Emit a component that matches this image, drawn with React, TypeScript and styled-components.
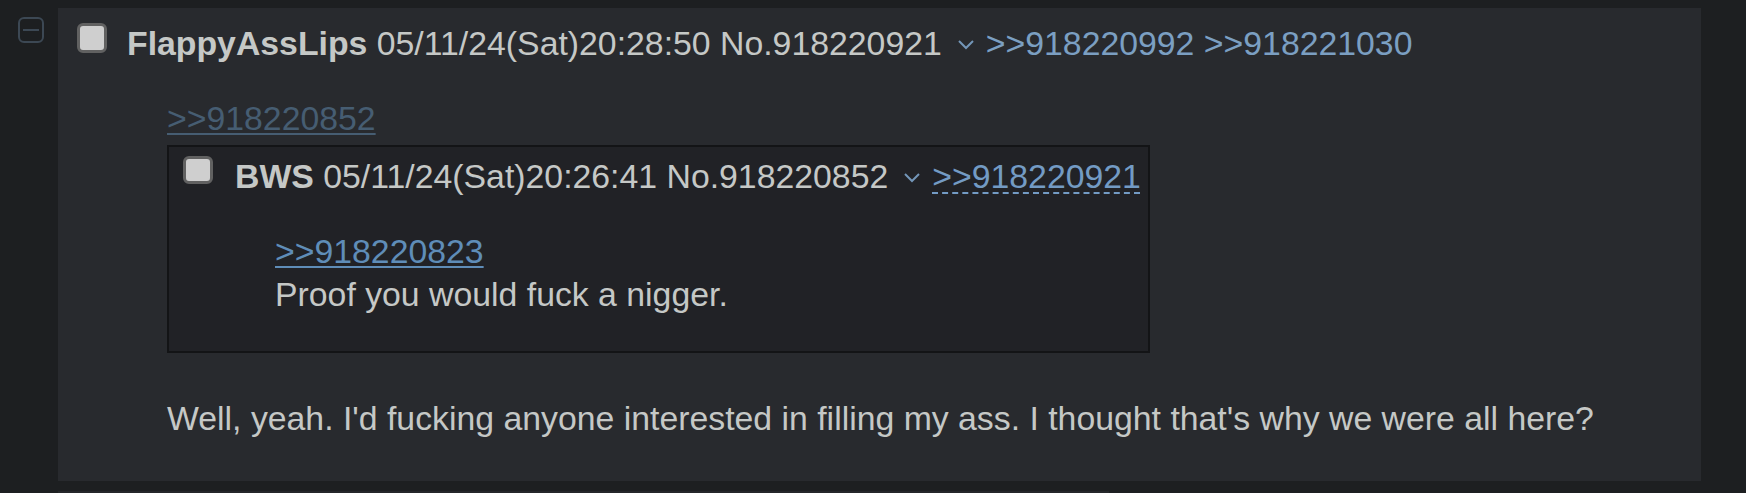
import React from 'react'
import styled, { createGlobalStyle } from 'styled-components'

const GlobalStyle = createGlobalStyle`
  body {
    margin: 0;
    background: #1d1f21;
    font-family: "Liberation Sans", Arial, sans-serif;
  }
`

const Chevron = (): JSX.Element => (
  <ChevronSvg viewBox="0 0 18 12">
    <polyline points="2,2 9,9 16,2" fill="none" stroke="#7396b8" strokeWidth="2" />
  </ChevronSvg>
)

const HideToggle = (): JSX.Element => (
  <svg width="26" height="26" viewBox="0 0 26 26">
    <rect x="1" y="1" width="24" height="24" rx="5" fill="none" stroke="#3c4854" strokeWidth="2" />
    <line x1="5" y1="13" x2="21" y2="13" stroke="#3c4854" strokeWidth="2" />
  </svg>
)

const App = (): JSX.Element => {
  return (
    <Page>
      <GlobalStyle />
      <Sidebar>
        <HideToggle />
      </Sidebar>
      <Thread>
        <Post>
          <PostInfo>
            <Checkbox $gap={20} />
            <InfoText>
              <Name>FlappyAssLips</Name> 05/11/24(Sat)20:28:50 No.918220921
              <Chevron />
              <Backlink>&gt;&gt;918220992</Backlink> <Backlink>&gt;&gt;918221030</Backlink>
            </InfoText>
          </PostInfo>
          <Message $left={90}>
            <QuoteLink $dim>&gt;&gt;918220852</QuoteLink>
            <InlinePost>
              <PostInfo>
                <Checkbox $gap={22} $small />
                <InfoText>
                  <Name>BWS</Name> 05/11/24(Sat)20:26:41 No.918220852
                  <Chevron />
                  <ForwardLink>&gt;&gt;918220921</ForwardLink>
                </InfoText>
              </PostInfo>
              <Message $left={92}>
                <QuoteLink>&gt;&gt;918220823</QuoteLink>
                <Line>Proof you would fuck a nigger.</Line>
              </Message>
            </InlinePost>
            <Body>
              Well, yeah. I'd fucking anyone interested in filling my ass. I
              thought that's why we were all here?
            </Body>
          </Message>
        </Post>
        <NextPost />
      </Thread>
    </Page>
  )
}

const Page = styled.div`
  display: flex;
  align-items: flex-start;
  min-height: 100vh;
  overflow: hidden;
`

const Sidebar = styled.div`
  width: 58px;
  flex-shrink: 0;
  box-sizing: border-box;
  padding: 17px 0 0 18px;
`

const Thread = styled.div`
  display: flex;
  flex-direction: column;
  align-items: flex-start;
  gap: 10px;
  padding-top: 8px;
`

const Post = styled.div`
  width: 1643px;
  box-sizing: border-box;
  background: #282a2e;
  padding: 16px 19px 7px;
  color: #c5c8c6;
  font-size: 33.8px;
  line-height: 38.6px;
`

const NextPost = styled.div`
  width: 1051px;
  height: 20px;
  background: #25272a;
`

const PostInfo = styled.div`
  display: flex;
  align-items: flex-start;
  white-space: nowrap;
`

const Checkbox = styled.span<{ $gap: number; $small?: boolean }>`
  display: block;
  flex-shrink: 0;
  width: 30px;
  height: ${(p) => (p.$small ? 28 : 30)}px;
  margin-top: -1px;
  margin-right: ${(p) => p.$gap}px;
  box-sizing: border-box;
  border: 3px solid #616161;
  border-radius: 6px;
  background: #cfcfcf;
`

const InfoText = styled.span``

const Name = styled.span`
  font-weight: bold;
`

const ChevronSvg = styled.svg`
  display: inline-block;
  width: 18px;
  height: 12px;
  margin: 0 11px 0 15px;
  vertical-align: 4px;
`

const Backlink = styled.span`
  color: #7b9fc2;
`

const ForwardLink = styled.span`
  color: #739bc4;
  text-decoration: underline dashed;
  text-decoration-thickness: 2px;
  text-underline-offset: 4px;
`

const Message = styled.div<{ $left: number }>`
  margin: 36px 0 36px ${(p) => p.$left}px;
`

const QuoteLink = styled.div<{ $dim?: boolean }>`
  color: ${(p) => (p.$dim ? '#465d72' : '#5f8db8')};
  text-decoration: underline;
  text-decoration-thickness: 2px;
  text-underline-offset: 3px;
  width: fit-content;
`

const Line = styled.div`
  margin-top: 5px;
`

const InlinePost = styled.div`
  width: fit-content;
  margin-top: 8px;
  padding: 10px 7px 1px 14px;
  background: #212226;
  border: 2px solid #131416;
`

const Body = styled.div`
  margin-top: 46px;
`

export default App
